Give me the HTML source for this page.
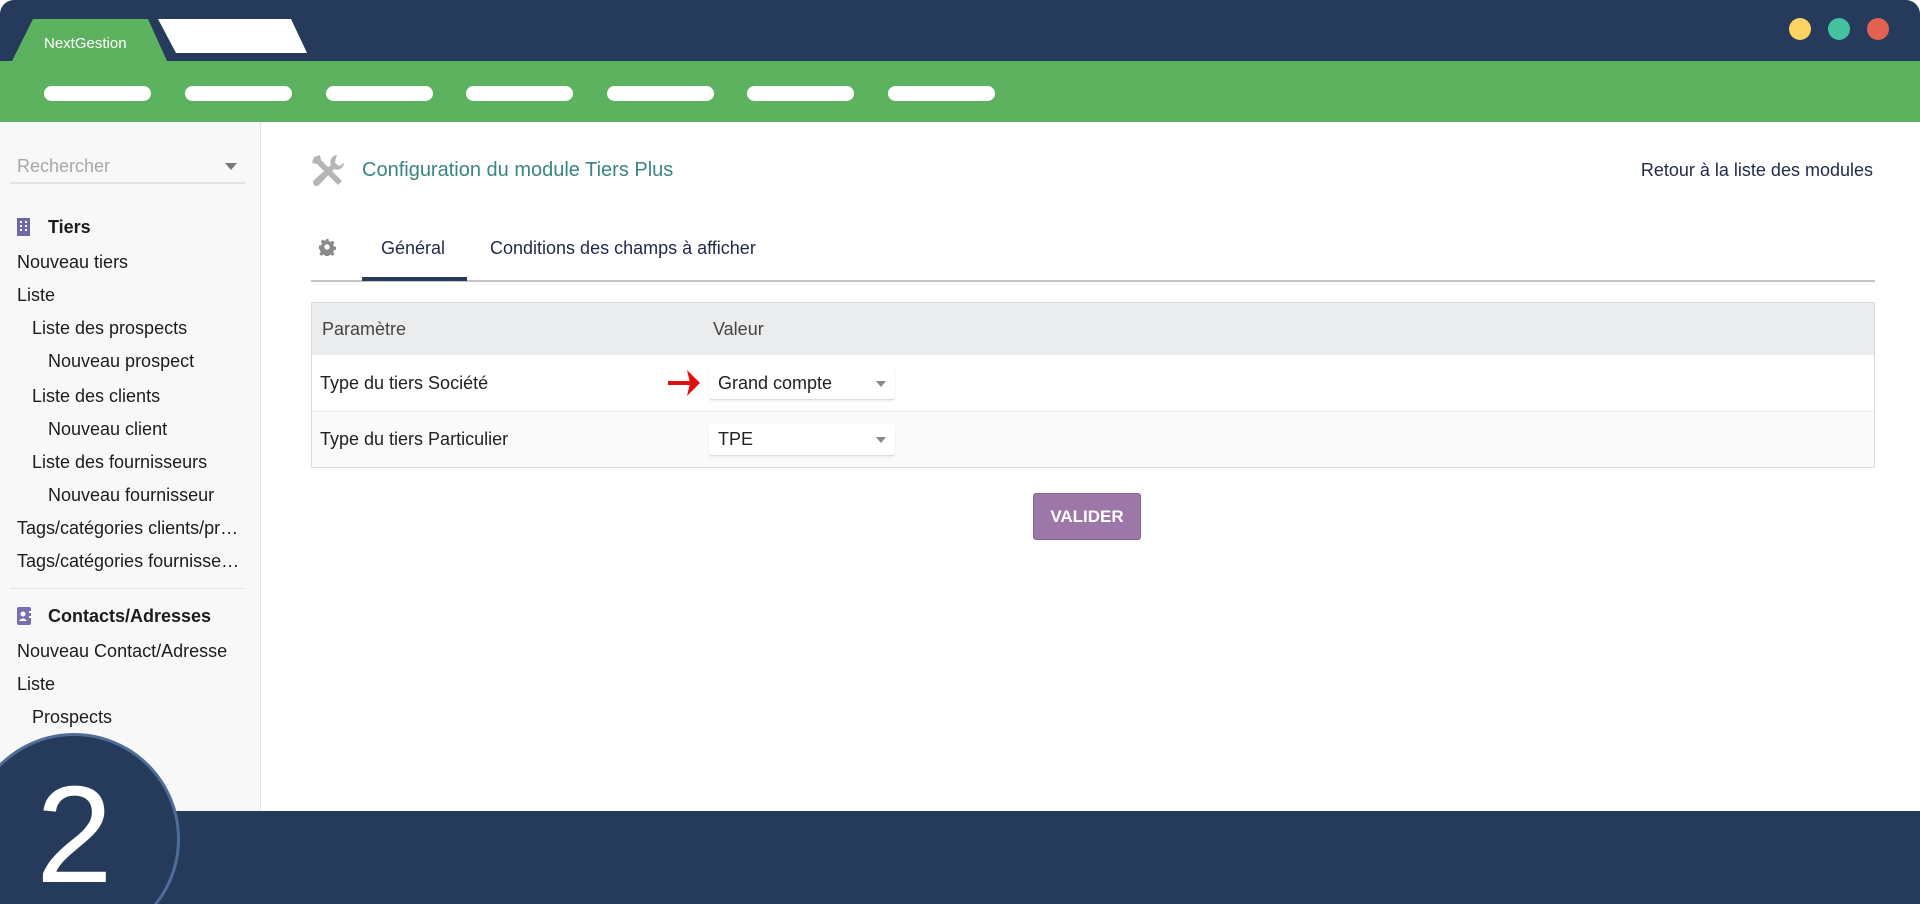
<!DOCTYPE html>
<html><head><meta charset="utf-8"><style>
*{margin:0;padding:0;box-sizing:border-box}
html,body{width:1920px;height:904px;overflow:hidden}
body{background:#fff;font-family:"Liberation Sans",Arial,sans-serif;color:#222}
#wrap{position:relative;width:1920px;height:904px;overflow:hidden}
.abs{position:absolute}
#top{left:0;top:0;width:1920px;height:62px;background:#263a5b;border-radius:14px 14px 0 0}
#green{left:0;top:61px;width:1920px;height:61px;background:#5db25f}
.pill{position:absolute;top:86px;height:15px;width:107px;background:#fff;border-radius:8px}
.dot{position:absolute;top:18px;width:22px;height:22px;border-radius:50%}
#side{left:0;top:122px;width:261px;height:690px;background:#f8f8f8;border-right:1px solid #e6e6e6}
.si{position:absolute;font-size:18px;color:#1c1c1c;white-space:nowrap}
#bottom{left:0;top:811px;width:1920px;height:93px;background:#263a5b}
.tx{position:absolute;white-space:nowrap}
</style></head><body><div id="wrap">
<div id="top" class="abs"></div>
<svg class="abs" style="left:0;top:0" width="320" height="62">
<polygon points="12,61 33,19 148,19 167,61" fill="#5db25f"/>
<polygon points="158,19 291,19 307,53 176,53" fill="#fff"/>
<text x="44" y="48" font-family="Liberation Sans" font-size="15" fill="#fff">NextGestion</text>
</svg>
<div class="dot" style="left:1789px;background:#fdd464"></div>
<div class="dot" style="left:1828px;background:#45c3a0"></div>
<div class="dot" style="left:1867px;background:#e4614f"></div>
<div id="green" class="abs"></div>
<div class="pill" style="left:44px"></div><div class="pill" style="left:185px"></div><div class="pill" style="left:326px"></div><div class="pill" style="left:466px"></div><div class="pill" style="left:607px"></div><div class="pill" style="left:747px"></div><div class="pill" style="left:888px"></div>

<div id="side" class="abs"></div>
<div class="si" style="left:17px;top:156px;color:#a8a8a8">Rechercher</div>
<div class="abs" style="left:225px;top:163px;width:0;height:0;border-left:6px solid transparent;border-right:6px solid transparent;border-top:7px solid #777"></div>
<div class="abs" style="left:10px;top:182px;width:235px;height:2px;background:#e2e2e2"></div>
<svg class="abs" style="left:16px;top:218px" width="15" height="18"><rect x="1" y="0" width="13" height="18" fill="#6e68a8"/><g fill="#fff"><rect x="4" y="3" width="2" height="2"/><rect x="9" y="3" width="2" height="2"/><rect x="4" y="7" width="2" height="2"/><rect x="9" y="7" width="2" height="2"/><rect x="4" y="11" width="2" height="2"/><rect x="9" y="11" width="2" height="2"/></g></svg>
<div class="si" style="left:48px;top:217px;font-weight:bold">Tiers</div>
<div class="si" style="left:17px;top:252px">Nouveau tiers</div>
<div class="si" style="left:17px;top:285px">Liste</div>
<div class="si" style="left:32px;top:318px">Liste des prospects</div>
<div class="si" style="left:48px;top:351px">Nouveau prospect</div>
<div class="si" style="left:32px;top:386px">Liste des clients</div>
<div class="si" style="left:48px;top:419px">Nouveau client</div>
<div class="si" style="left:32px;top:452px">Liste des fournisseurs</div>
<div class="si" style="left:48px;top:485px">Nouveau fournisseur</div>
<div class="si" style="left:17px;top:518px">Tags/catégories clients/pr…</div>
<div class="si" style="left:17px;top:551px">Tags/catégories fournisse…</div>
<div class="abs" style="left:10px;top:588px;width:235px;height:1px;background:#e2e2e2"></div>
<svg class="abs" style="left:16px;top:607px" width="17" height="18"><rect x="1" y="0" width="14" height="18" rx="2" fill="#7a6eb0"/><circle cx="7" cy="7" r="2.5" fill="#fff"/><path d="M3 14 Q7 9 11 14Z" fill="#fff"/><rect x="13" y="4" width="3" height="2" fill="#fff"/><rect x="13" y="9" width="3" height="2" fill="#fff"/></svg>
<div class="si" style="left:48px;top:606px;font-weight:bold">Contacts/Adresses</div>
<div class="si" style="left:17px;top:641px">Nouveau Contact/Adresse</div>
<div class="si" style="left:17px;top:674px">Liste</div>
<div class="si" style="left:32px;top:707px">Prospects</div>

<svg class="abs" style="left:311px;top:154px" width="34" height="34" viewBox="0 0 34 34">
<g fill="#b5b5b5"><path d="M3 7 L7 3 L31 27 L27 31Z"/><path d="M3 3 L9 1 L10 6 L6 10 L1 9Z"/><path d="M26 1 a7 7 0 0 0 -6 10 L3 26 a3 3 0 0 0 5 5 L23 15 a7 7 0 0 0 10 -6 l-5 3 l-4 -3 l1 -5z"/></g>
</svg>
<div class="tx" style="left:362px;top:159px;font-size:20px;color:#3b8484">Configuration du module Tiers Plus</div>
<div class="tx" style="right:47px;top:160px;font-size:18px;color:#1f2a4a">Retour à la liste des modules</div>
<svg class="abs" style="left:318px;top:238px" width="18" height="18" viewBox="0 0 20 20"><path fill="#8a8a8a" d="M8.5 1h3l.5 2.5 2 1 2.2-1.4 2.1 2.1-1.4 2.2.9 2 2.7.6v3l-2.7.5-.9 2 1.4 2.3-2.1 2.1-2.2-1.4-2 .8-.5 2.7h-3l-.5-2.7-2-.8-2.3 1.4-2.1-2.1 1.4-2.3-.8-2L1 11.5v-3l2.7-.6.8-2-1.4-2.2 2.1-2.1 2.3 1.4 2-1zM10 7a3 3 0 1 0 0 6 3 3 0 0 0 0-6z"/></svg>
<div class="tx" style="left:381px;top:238px;font-size:18px;color:#1f2a4a">Général</div>
<div class="tx" style="left:490px;top:238px;font-size:18px;color:#1f2a4a">Conditions des champs à afficher</div>
<div class="abs" style="left:311px;top:280px;width:1564px;height:2px;background:#c4c4c4"></div>
<div class="abs" style="left:362px;top:277px;width:105px;height:4px;background:#263a5b"></div>

<div class="abs" style="left:311px;top:302px;width:1564px;height:166px;border:1px solid #dcdcdc"></div>
<div class="abs" style="left:312px;top:303px;width:1562px;height:52px;background:#ebecee"></div>
<div class="abs" style="left:312px;top:411px;width:1562px;height:56px;background:#fafafa;border-top:1px solid #ececec"></div>
<div class="tx" style="left:322px;top:319px;font-size:18px;color:#444">Paramètre</div>
<div class="tx" style="left:713px;top:319px;font-size:18px;color:#444">Valeur</div>
<div class="tx" style="left:320px;top:373px;font-size:18px">Type du tiers Société</div>
<div class="tx" style="left:320px;top:429px;font-size:18px">Type du tiers Particulier</div>
<svg class="abs" style="left:667px;top:368px" width="34" height="30"><path d="M1 13h22v4H1z" fill="#e01010"/><path d="M20 2 L33 15 L20 28 L23 15Z" fill="#e01010"/></svg>
<div class="abs" style="left:709px;top:367px;width:186px;height:33px;background:#fff;border-bottom:1px solid #ddd;border-radius:3px;box-shadow:0 1px 2px rgba(0,0,0,.08)"></div>
<div class="tx" style="left:718px;top:373px;font-size:18px">Grand compte</div>
<div class="abs" style="left:876px;top:381px;border-left:5px solid transparent;border-right:5px solid transparent;border-top:6px solid #888"></div>
<div class="abs" style="left:709px;top:423px;width:186px;height:33px;background:#fff;border-bottom:1px solid #ddd;border-radius:3px;box-shadow:0 1px 2px rgba(0,0,0,.08)"></div>
<div class="tx" style="left:718px;top:429px;font-size:18px">TPE</div>
<div class="abs" style="left:876px;top:437px;border-left:5px solid transparent;border-right:5px solid transparent;border-top:6px solid #888"></div>

<div class="abs" style="left:1033px;top:493px;width:108px;height:47px;background:#9c77a8;border-radius:3px;border:1px solid #8a6596;color:#fff;font-weight:bold;font-size:17px;text-align:center;line-height:45px">VALIDER</div>

<div id="bottom" class="abs"></div>
<div class="abs" style="left:-32px;top:733px;width:212px;height:212px;border-radius:50%;background:#263a5b;border:3px solid #4f6d96"></div>
<div class="tx" style="left:36px;top:766px;font-size:138px;color:#fff;line-height:1">2</div>
</div></body></html>
